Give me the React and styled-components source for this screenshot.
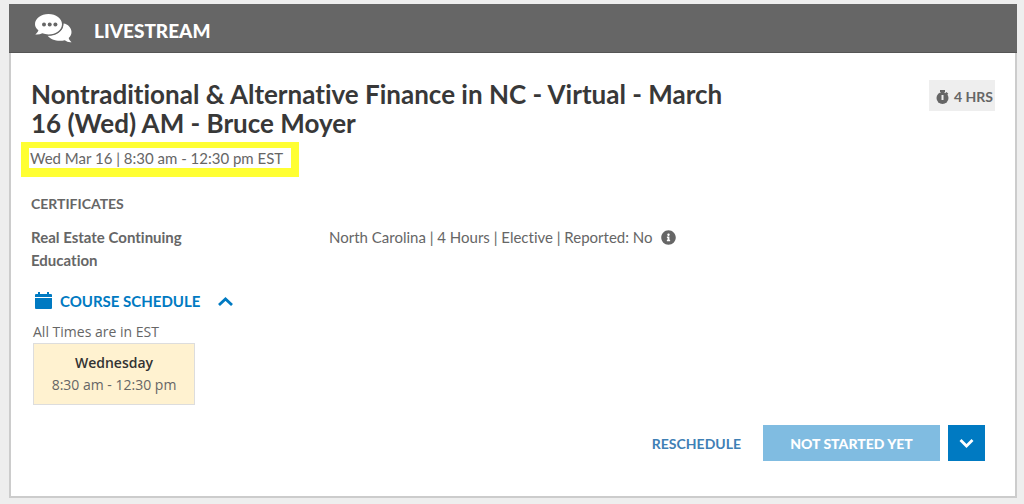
import React, { useState } from 'react';
import styled, { createGlobalStyle } from 'styled-components';
import { FaInfoCircle } from 'react-icons/fa';


const GlobalStyle = createGlobalStyle`
* {
  box-sizing: border-box;
}

body {
  margin: 0;
  background-color: #eeeeee;
  font-family: Lato, "Open Sans", sans-serif;
  font-variant-ligatures: none;
  color: #666666;
}
`;

const Page = styled.main`
padding: 4px 7px 7px 9px;
`;

const Card = styled.article`
background-color: #ffffff;
border: 2px solid #cccccc;
border-top: none;
`;

const Header = styled.header`
display: flex;
align-items: center;
gap: 22px;
height: 49px;
margin: 0 -2px;
padding: 0 26px;
background-color: #666666;
border-bottom: 1px solid #555555;
color: #ffffff;
`;

const HeaderTitle = styled.h1`
margin: 5px 0 0;
font-size: 19px;
line-height: 22px;
font-weight: 900;
`;

const Body = styled.div`
padding: 27px 30px 35px 20px;
`;

const TopRow = styled.div`
display: flex;
align-items: flex-start;
justify-content: space-between;
`;

const Title = styled.h2`
margin: 0;
max-width: 720px;
font-size: 26px;
line-height: 29px;
font-weight: 700;
color: #383838;
`;

const Hours = styled.div`
display: flex;
align-items: center;
gap: 5px;
height: 31px;
margin-right: -10px;
padding: 2px 2px 0 7px;
background-color: #eeeeee;
font-size: 14px;
font-weight: 700;
white-space: nowrap;
`;

const DateMark = styled.div`
width: fit-content;
margin: 4px 0 0 -10px;
padding: 0 8px 0 1px;
border: solid #ffff33;
border-width: 6px 8px 9px;
font-size: 15px;
line-height: 20px;
`;

const Label = styled.h3`
margin: 17px 0 12px;
font-size: 14px;
line-height: 20px;
font-weight: 700;
`;

const Certificate = styled.div`
display: grid;
grid-template-columns: 180px 1fr;
column-gap: 118px;
font-size: 15px;
line-height: 23px;
`;

const CertificateName = styled.div`
font-weight: 700;
`;

const CertificateInfo = styled.div`
display: flex;
align-items: center;
gap: 8px;
height: 23px;
`;

const ScheduleToggle = styled.button`
display: flex;
align-items: center;
gap: 8px;
margin-top: 17px;
padding: 0 4px;
height: 24px;
border: none;
background: none;
color: #007ac2;
font-family: inherit;
font-size: 15px;
font-weight: 700;
cursor: pointer;
`;

const ToggleText = styled.span`
margin-right: 10px;
`;

const Schedule = styled.section`
margin-left: 2px;
font-family: "Open Sans", "Noto Sans", sans-serif;
font-size: 14px;
line-height: 22px;
`;

const TimeZone = styled.p`
margin: 8px 0 0;
`;

const Day = styled.div`
width: 162px;
height: 62px;
padding-top: 8px;
border: 1px solid #dddddd;
background-color: #fff2d0;
text-align: center;
`;

const DayName = styled.div`
font-weight: 600;
color: #333333;
`;

const Actions = styled.footer`
display: flex;
align-items: center;
justify-content: flex-end;
gap: 8px;
margin-top: 20px;
`;

const Reschedule = styled.a`
margin-right: 14px;
font-size: 14px;
color: #3f80b5;
font-weight: 700;
text-decoration: none;
`;

const Button = styled.button`
display: flex;
align-items: center;
justify-content: center;
width: ${(props) => props.$width};
height: 36px;
padding: 0;
border: none;
background-color: ${(props) => (props.$muted ? '#80bce1' : '#007ac2')};
color: #ffffff;
font-family: inherit;
font-size: 14px;
font-weight: 900;
cursor: pointer;
`;


const ChatIcon = () => (
    <svg width="37" height="29" viewBox="0 0 37 29" aria-hidden="true">
        <path fill="#fff" d="M28.500 9.500c4.500.5 8 4.400 8 8.500 0 2.400-1 4.500-2.800 6 .4 1.700 1.400 3 2.900 4.200-2.600.3-4.800-.3-6.800-1.900-6.600 1.600-14-.2-17.300-4.700C22 21.600 28.500 17 28.500 9.500z" />
        <path fill="#fff" stroke="#666" strokeWidth="2.600" paintOrder="stroke" d="M13.500 0C21 0 27 4.500 27 10.200s-6 10.200-13.500 10.200c-2.300 0-4.400-.4-6.200-1.100-2.100 1.100-4.400 1.500-7 1.200 1.500-1.100 2.600-2.400 3.100-4.200C1.300 14.700 0 12.600 0 10.200 0 4.500 6 0 13.500 0z" />
        <circle cx="9" cy="10.500" r="2" fill="#666" />
        <circle cx="14.700" cy="10.500" r="2" fill="#666" />
        <circle cx="20.400" cy="10.500" r="2" fill="#666" />
    </svg>
);

const StopwatchIcon = () => (
    <svg width="13" height="14" viewBox="0 0 13 14" aria-hidden="true">
        <path fill="#666" d="M4 0h5v2H8v1h-3V2H4zM10.500 2l1.800 1.800-1.300 1.300-1.800-1.800z" />
        <circle cx="6.500" cy="8" r="6" fill="#666" />
        <path fill="#eee" d="M5.500 5h2v5h-2z" />
    </svg>
);

const CalendarIcon = () => (
    <svg width="17" height="18" viewBox="0 0 17 18" aria-hidden="true">
        <path fill="#007ac2" d="M3 0h2v2h7V0h2v2h2a1 1 0 0 1 1 1v2H0V3a1 1 0 0 1 1-1h2zM0 6h17v10a1 1 0 0 1-1 1H1a1 1 0 0 1-1-1z" />
    </svg>
);

const Chevron = ({ up }) => (
    <svg width="15" height="9" viewBox="0 0 15 9" aria-hidden="true">
        <path fill="none" stroke="currentColor" strokeWidth="2.800" d={up ? 'M1 8l6.500-6L14 8' : 'M1.500 1l6 6 6-6'} />
    </svg>
);


const App = () => {
    const [open, setOpen] = useState(true);

    return (
        <>
            <GlobalStyle />
            <Page>
                <Card>
                    <Header>
                        <ChatIcon />
                        <HeaderTitle>LIVESTREAM</HeaderTitle>
                    </Header>
                    <Body>
                        <TopRow>
                            <Title>Nontraditional &amp; Alternative Finance in NC - Virtual - March 16 (Wed) AM - Bruce Moyer</Title>
                            <Hours><StopwatchIcon />4 HRS</Hours>
                        </TopRow>
                        <DateMark>Wed Mar 16 | 8:30 am - 12:30 pm EST</DateMark>
                        <Label>CERTIFICATES</Label>
                        <Certificate>
                            <CertificateName>Real Estate Continuing Education</CertificateName>
                            <CertificateInfo>
                                North Carolina | 4 Hours | Elective | Reported: No
                                <FaInfoCircle size={15} />
                            </CertificateInfo>
                        </Certificate>
                        <ScheduleToggle aria-expanded={open} onClick={() => setOpen(!open)}>
                            <CalendarIcon />
                            <ToggleText>COURSE SCHEDULE</ToggleText>
                            <Chevron up={open} />
                        </ScheduleToggle>
                        {open && (
                            <Schedule>
                                <TimeZone>All Times are in EST</TimeZone>
                                <Day>
                                    <DayName>Wednesday</DayName>
                                    8:30 am - 12:30 pm
                                </Day>
                            </Schedule>
                        )}
                        <Actions>
                            <Reschedule href="#reschedule">RESCHEDULE</Reschedule>
                            <Button $muted $width="177px">NOT STARTED YET</Button>
                            <Button $width="37px" aria-label="More options"><Chevron /></Button>
                        </Actions>
                    </Body>
                </Card>
            </Page>
        </>
    );
};


export default App;
